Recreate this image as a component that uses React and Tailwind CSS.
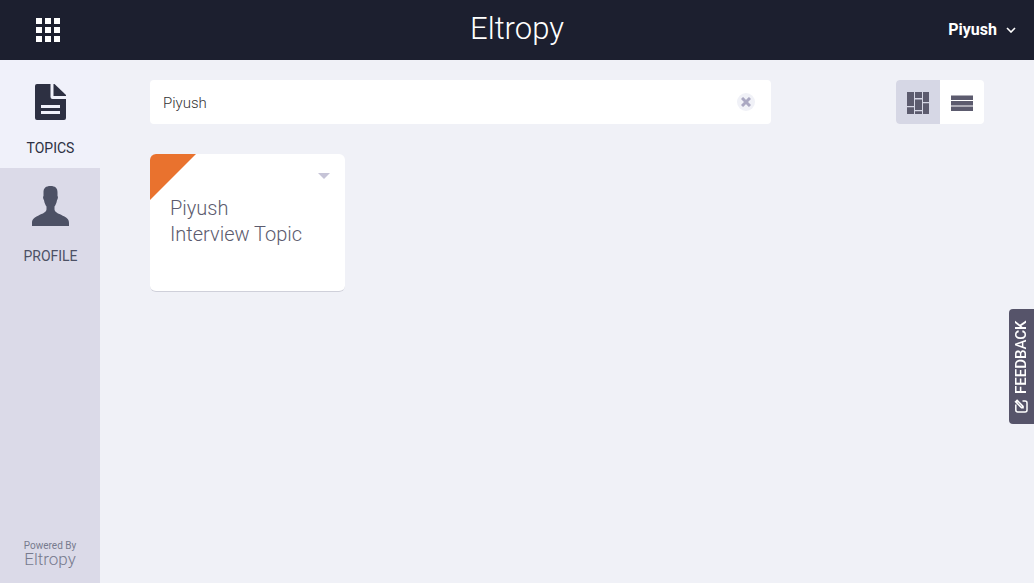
import React, { useState } from "react";

function GridIcon() {
  return (
    <svg width="24" height="24" viewBox="0 0 24 24" fill="#fff" aria-hidden="true">
      {[0, 9, 18].map((y) => [0, 9, 18].map((x) => <rect key={`${x}-${y}`} x={x} y={y} width="6" height="6" />))}
    </svg>
  );
}

function TopicIcon() {
  return (
    <svg width="31" height="36" viewBox="0 0 31 36" fill="#2d3042" aria-hidden="true">
      <path
        fillRule="evenodd"
        d="M2 0H15.500V13Q15.500 15 17.500 15H31V34Q31 36 29 36H2Q0 36 0 34V2Q0 0 2 0ZM6 21V24H25V21ZM6 27V30H25V27Z"
      />
      <path d="M18.500 0H19.500L31 11V12H18.500Z" />
    </svg>
  );
}

function ProfileIcon() {
  return (
    <svg width="37" height="40" viewBox="0 0 37 40" fill="#4d5165" aria-hidden="true">
      <path d="M18.500 0C23 0 25.600 2 25.500 6.500V10C26.300 10.500 26 13 25 14.200C24.400 17.500 23.500 19 22.500 20.500V23.500C23 27 28 28 32.500 30.500C36 32.500 37 34 37 37V40H0V37C0 34 1 32.500 4.500 30.500C9 28 14 27 14.500 23.500V20.500C13.500 19 12.600 17.500 12 14.200C11 13 10.700 10.500 11.500 10V6.500C11.400 2 14 0 18.500 0Z" />
    </svg>
  );
}

function TilesIcon() {
  return (
    <svg width="22" height="22" viewBox="0 0 22 22" fill="#5c5b6e" aria-hidden="true">
      <path d="M0 0H7V14H0ZM0 15.200H7V22H0ZM8 0H15V6H8ZM8 7.500H15V18H8ZM8 19.200H15V22H8ZM16 0H22V10H16ZM16 11.200H22V22H16Z" />
    </svg>
  );
}

function RowsIcon() {
  return (
    <svg width="22" height="16" viewBox="0 0 22 16" fill="#5c5b6e" aria-hidden="true">
      <path d="M0 0.500H22V5H0ZM0 6H22V10.500H0ZM0 11.500H22V16H0Z" />
    </svg>
  );
}

function EditIcon() {
  return (
    <svg width="14" height="14" viewBox="0 0 14 14" fill="none" aria-hidden="true">
      <path d="M8.500 1.800H3Q1 1.800 1 3.800V11Q1 13 3 13H10Q12 13 12 11V8.500" stroke="#fff" strokeWidth="1.500" />
      <path d="M4.500 7.200L11.200 0.500L13.800 3.100L7.100 9.800H4.500Z" fill="#fff" />
      <path d="M6.500 7.800L10.800 3.500" stroke="#56546a" strokeWidth="0.700" />
    </svg>
  );
}

export default function App() {
  const [query, setQuery] = useState("Piyush");
  const [view, setView] = useState("tiles");
  return (
    <div className="flex min-h-screen flex-col bg-[#f0f1f7] font-[Roboto,sans-serif]">
      <header className="grid h-15 grid-cols-3 items-center bg-[#1c1f2f] px-[18px] text-white">
        <button type="button" aria-label="Apps" className="justify-self-start pl-[18px]">
          <GridIcon />
        </button>
        <h1 className="justify-self-center pb-[2px] text-[31px] leading-9 font-light">Eltropy</h1>
        <button type="button" className="flex items-center gap-[9px] justify-self-end text-base font-bold">
          Piyush
          <svg width="10" height="6" viewBox="0 0 10 6" fill="none" stroke="#fff" strokeWidth="1.600" aria-hidden="true">
            <path d="M1 1L5 5L9 1" />
          </svg>
        </button>
      </header>

      <div className="flex flex-1">
        <aside className="flex w-25 shrink-0 flex-col bg-[#dbdae8]">
          <nav className="flex flex-col text-sm leading-5">
            <a href="#topics" aria-current="page" className="flex h-27 flex-col items-center bg-[#f0f1fa] pt-6 pl-px text-[#2d3042]">
              <TopicIcon />
              <span className="mt-[18px]">TOPICS</span>
            </a>
            <a href="#profile" className="flex h-27 flex-col items-center pt-[18px] pl-px text-[#4d5165]">
              <ProfileIcon />
              <span className="mt-5">PROFILE</span>
            </a>
          </nav>
          <footer className="mt-auto flex flex-col items-center pb-4 text-[#777a8e]">
            <span className="text-[10px] leading-[11px]">Powered By</span>
            <span className="text-[17px] leading-4 font-light">Eltropy</span>
          </footer>
        </aside>

        <main className="flex flex-1 flex-col gap-[30px] px-[50px] pt-5">
          <div className="flex items-center gap-[125px]">
            <div className="flex h-11 min-w-0 flex-1 items-center rounded bg-white pr-4 pl-[13px]">
              <input
                type="text"
                aria-label="Search topics"
                value={query}
                onChange={(e) => setQuery(e.target.value)}
                className="h-11 min-w-0 flex-1 pt-px text-[15px] font-light text-[#333] outline-none"
              />
              <button
                type="button"
                aria-label="Clear search"
                onClick={() => setQuery("")}
                className="flex size-[18px] items-center justify-center rounded-full bg-[#f0f1f7]"
              >
                <svg width="10" height="10" viewBox="0 0 10 10" stroke="#aaa8c2" strokeWidth="3" aria-hidden="true">
                  <path d="M1 1L9 9M9 1L1 9" />
                </svg>
              </button>
            </div>
            <div className="flex shrink-0 overflow-hidden rounded bg-white">
              <button
                type="button"
                aria-label="Tile view"
                aria-pressed={view === "tiles"}
                onClick={() => setView("tiles")}
                className="flex size-11 items-center justify-center pt-px aria-pressed:bg-[#d6d7e5]"
              >
                <TilesIcon />
              </button>
              <button
                type="button"
                aria-label="List view"
                aria-pressed={view === "list"}
                onClick={() => setView("list")}
                className="flex size-11 items-center justify-center pt-px aria-pressed:bg-[#d6d7e5]"
              >
                <RowsIcon />
              </button>
            </div>
          </div>

          <article className="relative flex h-[138px] w-[195px] flex-col overflow-hidden rounded-md border-b border-[#cfd0da] bg-white px-5 pt-[41px]">
            <svg width="46" height="46" viewBox="0 0 46 46" className="absolute top-0 left-0" aria-hidden="true">
              <path d="M0 0H46L0 46Z" fill="#e9722e" />
            </svg>
            <button type="button" aria-label="Topic options" className="absolute top-[19px] right-[15px]">
              <svg width="12" height="6" viewBox="0 0 12 6" fill="#c6c4d7" className="block" aria-hidden="true">
                <path d="M0 0H12L6 6Z" />
              </svg>
            </button>
            <h2 className="text-xl leading-[26px] font-light text-[#5c5b6e]">
              Piyush
              <br />
              Interview Topic
            </h2>
          </article>
        </main>
      </div>

      <button
        type="button"
        className="fixed top-[309px] right-0 flex h-[115px] w-[25px] rotate-180 items-center justify-center gap-[5px] rounded-r bg-[#56546a] text-[15px] font-medium text-white [writing-mode:vertical-rl]"
      >
        <span className="rotate-90">
          <EditIcon />
        </span>
        FEEDBACK
      </button>
    </div>
  );
}
